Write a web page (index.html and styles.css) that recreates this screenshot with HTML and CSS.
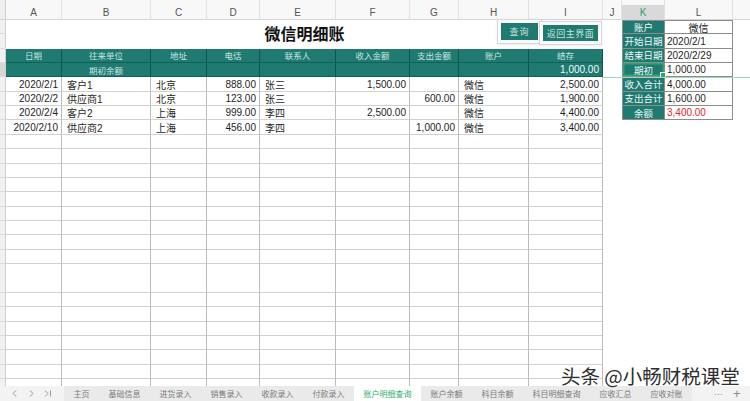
FILE: index.html
```html
<!DOCTYPE html>
<html lang="zh-CN">
<head>
<meta charset="utf-8">
<title>微信明细账</title>
<link rel="stylesheet" href="styles.css">
</head>
<body>
<div class="sheet">
  <div class="ch corner"></div>
  <div class="ch">A</div><div class="ch">B</div><div class="ch">C</div><div class="ch">D</div><div class="ch">E</div><div class="ch">F</div><div class="ch">G</div><div class="ch">H</div><div class="ch">I</div><div class="ch">J</div><div class="ch sel">K</div><div class="ch">L</div><div class="ch last"></div>

  <div class="rh"></div>
  <div class="title">微信明细账</div>
  <div></div><div class="k top">账户</div><div class="l top ctr">微信</div><div></div>

  <div class="rh"></div>
  <div></div><div class="k">开始日期</div><div class="l">2020/2/1</div><div></div>

  <div class="rh"></div>
  <div class="th">日期</div><div class="th">往来单位</div><div class="th">地址</div><div class="th">电话</div><div class="th">联系人</div><div class="th">收入金额</div><div class="th">支出金额</div><div class="th">账户</div><div class="th">结存</div>
  <div></div><div class="k">结束日期</div><div class="l">2020/2/29</div><div></div>

  <div class="rh sel"></div>
  <div class="th"></div><div class="th">期初余额</div><div class="th"></div><div class="th"></div><div class="th"></div><div class="th"></div><div class="th"></div><div class="th"></div><div class="th num">1,000.00</div>
  <div></div><div class="k cur">期初</div><div class="l">1,000.00</div><div></div>

  <div class="rh"></div>
  <div class="c r">2020/2/1</div><div class="c">客户1</div><div class="c">北京</div><div class="c r">888.00</div><div class="c">张三</div><div class="c r">1,500.00</div><div class="c"></div><div class="c">微信</div><div class="c r">2,500.00</div>
  <div></div><div class="k">收入合计</div><div class="l">4,000.00</div><div></div>

  <div class="rh"></div>
  <div class="c r">2020/2/2</div><div class="c">供应商1</div><div class="c">北京</div><div class="c r">123.00</div><div class="c">张三</div><div class="c"></div><div class="c r">600.00</div><div class="c">微信</div><div class="c r">1,900.00</div>
  <div></div><div class="k">支出合计</div><div class="l">1,600.00</div><div></div>

  <div class="rh"></div>
  <div class="c r">2020/2/4</div><div class="c">客户2</div><div class="c">上海</div><div class="c r">999.00</div><div class="c">李四</div><div class="c r">2,500.00</div><div class="c"></div><div class="c">微信</div><div class="c r">4,400.00</div>
  <div></div><div class="k">余额</div><div class="l red">3,400.00</div><div></div>

  <div class="rh"></div>
  <div class="c r">2020/2/10</div><div class="c">供应商2</div><div class="c">上海</div><div class="c r">456.00</div><div class="c">李四</div><div class="c"></div><div class="c r">1,000.00</div><div class="c">微信</div><div class="c r">3,400.00</div>
  <div></div><div></div><div></div><div></div>

  <div class="fill rhf"></div>
  <div class="fill"></div><div class="fill"></div><div class="fill"></div><div class="fill"></div><div class="fill"></div><div class="fill"></div><div class="fill"></div><div class="fill"></div><div class="fill"></div>
</div>

<div class="btn q">查询</div>
<div class="btn back">返回主界面</div>
<div class="freeze"></div>

<div class="tabs">
  <div class="nav">
    <svg width="64" height="15" viewBox="0 0 64 15">
      <polyline points="16,4.5 13,7.5 16,10.5" fill="none" stroke="#9a9a9a" stroke-width="1"/>
      <polyline points="30,4.5 33,7.5 30,10.5" fill="none" stroke="#9a9a9a" stroke-width="1"/>
      <polyline points="45,4.5 48,7.5 45,10.5" fill="none" stroke="#9a9a9a" stroke-width="1"/>
      <line x1="50.5" y1="4.5" x2="50.5" y2="10.5" stroke="#9a9a9a" stroke-width="1"/>
    </svg>
  </div>
  <div class="tablist">
    <div class="tab">主页</div>
    <div class="tab">基础信息</div>
    <div class="tab">进货录入</div>
    <div class="tab">销售录入</div>
    <div class="tab">收款录入</div>
    <div class="tab">付款录入</div>
    <div class="tab active">账户明细查询</div>
    <div class="tab">账户余额</div>
    <div class="tab">科目余额</div>
    <div class="tab">科目明细查询</div>
    <div class="tab">应收汇总</div>
    <div class="tab">应收对账</div>
  </div>
  <div class="more"><span class="dots">···</span><span class="plus">+</span></div>
</div>

<div class="mark">头条 @小畅财税课堂</div>
</body>
</html>
```

FILE: styles.css
```css
* { box-sizing: border-box; margin: 0; padding: 0; }
html, body { width: 750px; height: 401px; overflow: hidden; background: #fff; }
body {
  position: relative;
  font-family: "Liberation Sans", "Noto Sans CJK SC", sans-serif;
  font-size: 10px;
  color: #1e1e1e;
}

.sheet {
  display: grid;
  grid-template-columns: 6px 56px 89px 56px 53px 76px 74px 49px 70px 74px 19px 43px 68px 1fr;
  grid-template-rows: 20px;
  grid-auto-rows: 14.35px;
  height: 386px;
  overflow: hidden;
}

/* column headers */
.ch {
  background: #f8f8f8;
  border-right: 1px solid #e2e2e2;
  border-bottom: 1px solid #d4d4d4;
  color: #555;
  font-size: 10px;
  display: flex;
  align-items: center;
  justify-content: center;
  padding-top: 5px;
}
.ch.corner { background: #efefef; border-right-color: #d0d0d0; }
.ch.sel { background: linear-gradient(#f8f8f8 0 5px, #d9d9d9 5px); color: #22a36a; }
.ch.last { border-right: none; }

/* row headers */
.rh {
  background: #f1f1f1;
  border-right: 1px solid #cfcfcf;
  border-bottom: 1px solid #dcdcdc;
}
.rh.sel { background: #d6d6d6; }

/* body cells */
.c {
  border-right: 1px solid #bcbcbc;
  border-bottom: 1px solid #d2d2d2;
  padding: 0 3px 0 5px;
  white-space: nowrap;
  overflow: hidden;
  display: flex;
  align-items: center;
}
.r { justify-content: flex-end; }

.title {
  grid-column: span 9;
  grid-row: span 2;
  display: flex;
  align-items: center;
  justify-content: center;
  font-family: "Noto Sans CJK SC", sans-serif;
  font-size: 16px;
  font-weight: bold;
  color: #111;
  padding-bottom: 2px;
}

.th {
  background: #1f7a71;
  color: #cbe5e0;
  font-size: 8.5px;
  display: flex;
  align-items: center;
  justify-content: center;
  border-right: 1px solid #0f564f;
  border-bottom: 1px solid #135e57;
  white-space: nowrap;
}
.th.num { justify-content: flex-end; padding-right: 3px; font-size: 10px; color: #f4faf9; }

/* summary table K:L */
.k, .l {
  border-right: 1px solid #8c8c8c;
  border-bottom: 1px solid #8c8c8c;
  display: flex;
  align-items: center;
  white-space: nowrap;
}
.k {
  background: #1f7a71;
  color: #eef7f5;
  border-left: 1px solid #8c8c8c;
  justify-content: center;
  font-size: 9.5px;
  overflow: hidden;
}
.l { padding-left: 2px; }
.ctr { justify-content: center; padding-left: 0; }
.top { border-top: 1px solid #8c8c8c; }
.red { color: #e5262b; }
.cur { position: relative; overflow: visible; box-shadow: inset 0 0 0 1.5px #2aa76f; }
.cur::after {
  content: "";
  position: absolute;
  right: -2px;
  bottom: -2px;
  width: 4px;
  height: 4px;
  background: #2aa76f;
  border: 1px solid #fff;
}

/* empty grid below data */
.fill {
  grid-row: span 18;
  border-right: 1px solid #bcbcbc;
  background: repeating-linear-gradient(to bottom, transparent 0 13.35px, #d2d2d2 13.35px 14.35px);
}
.fill.rhf {
  border-right-color: #cfcfcf;
  background: repeating-linear-gradient(to bottom, #f1f1f1 0 13.35px, #dcdcdc 13.35px 14.35px);
}

/* floating buttons over the sheet */
.btn {
  position: absolute;
  background: #1f7a71;
  color: #c9e2dd;
  font-family: "Noto Sans CJK SC", sans-serif;
  font-size: 9px;
  display: flex;
  align-items: center;
  justify-content: center;
  box-shadow: 0 0 0 3px #fbfbfb, 0 0 0 4px #d6d6d6, 0 1px 3px 4px rgba(0,0,0,0.08);
}
.btn.q { left: 501px; top: 23px; width: 37px; height: 17px; letter-spacing: 1px; }
.btn.back { left: 543px; top: 25px; width: 55px; height: 16px; letter-spacing: 0.5px; }

.freeze {
  position: absolute;
  left: 603px;
  right: 0;
  top: 77px;
  height: 1px;
  background: #98dcbd;
}

/* sheet tabs */
.tabs {
  display: flex;
  height: 15px;
  background: #f3f3f3;
  font-family: "Noto Sans CJK SC", sans-serif;
  font-size: 8px;
  color: #7a7a7a;
}
.nav { width: 64px; display: flex; }
.tablist { display: flex; background: #eaeaea; }
.tab {
  padding: 0 9.5px;
  line-height: 15px;
  white-space: nowrap;
}
.tab.active { background: #fff; color: #2fae6e; }
.more {
  flex: 1;
  display: flex;
  align-items: center;
  color: #8a8a8a;
}
.dots { margin-left: 22px; font-size: 9px; font-family: "Liberation Sans", sans-serif; }
.plus { margin-left: 10px; font-size: 13px; font-family: "Liberation Sans", sans-serif; line-height: 15px; }

/* watermark */
.mark {
  position: absolute;
  left: 561px;
  top: 363px;
  font-family: "Noto Sans CJK SC", sans-serif;
  font-size: 19.5px;
  line-height: 26px;
  color: #2e2e2e;
  white-space: nowrap;
  text-shadow: 0 0 2px #fff, 0 0 2px #fff;
}
```
